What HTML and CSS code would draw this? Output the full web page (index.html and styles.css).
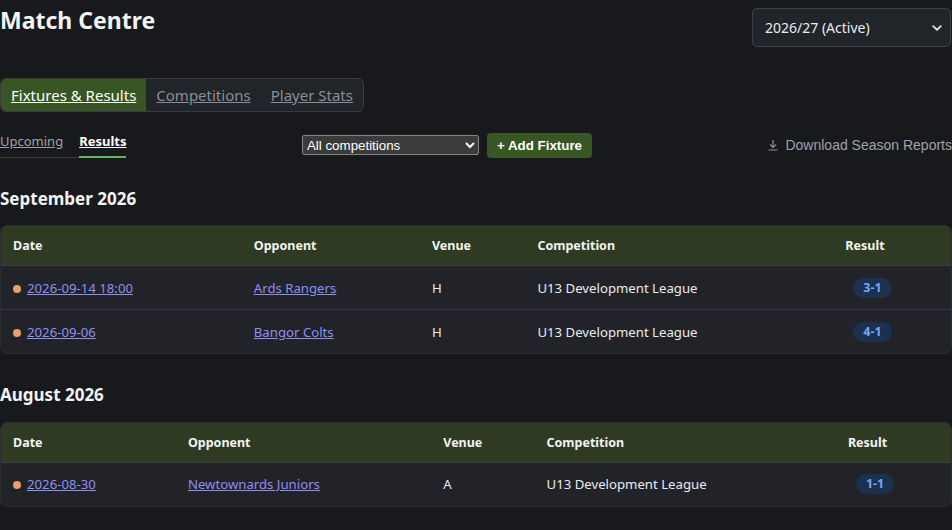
FILE: index.html
```html
<!DOCTYPE html>
<html lang="en">
<head>
    <meta charset="UTF-8">
    <meta name="viewport" content="width=device-width, initial-scale=1.0">
    <title>Match Centre</title>
    <link rel="stylesheet" href="styles.css">
</head>
<body>
    <div class="page">
        <header class="page-head">
            <h1>Match Centre</h1>
            <div class="season-picker">
                <select class="season-select">
                    <option>2026/27 (Active)</option>
                    <option>2025/26</option>
                </select>
                <svg class="season-chevron" width="10" height="10" viewBox="0 0 16 16">
                    <path d="M2 5l6 6 6-6" fill="none" stroke="#dee2e6" stroke-width="3" stroke-linecap="round" stroke-linejoin="round"/>
                </svg>
            </div>
        </header>

        <nav class="main-tabs">
            <a href="#" class="main-tab active">Fixtures &amp; Results</a>
            <a href="#" class="main-tab">Competitions</a>
            <a href="#" class="main-tab">Player Stats</a>
        </nav>

        <div class="toolbar">
            <div class="sub-tabs">
                <a href="#" class="sub-tab">Upcoming</a>
                <a href="#" class="sub-tab active">Results</a>
            </div>
            <div class="toolbar-mid">
                <select class="comp-select">
                    <option>All competitions</option>
                    <option>U13 Development League</option>
                </select>
                <button class="btn-add">+ Add Fixture</button>
            </div>
            <a href="#" class="download-link">
                <svg width="12" height="12" viewBox="0 0 12 12">
                    <path d="M6 1v7M3 5.5l3 3 3-3M1.5 11h9" fill="none" stroke="#8d9196" stroke-width="1.2"/>
                </svg>
                Download Season Reports
            </a>
        </div>

        <!-- September -->
        <section class="month">
            <h2>September 2026</h2>
            <div class="table-wrap">
                <table class="fixtures">
                    <thead>
                        <tr>
                            <th>Date</th>
                            <th>Opponent</th>
                            <th>Venue</th>
                            <th>Competition</th>
                            <th>Result</th>
                        </tr>
                    </thead>
                    <tbody>
                        <tr>
                            <td><span class="dot"></span><a href="#">2026-09-14 18:00</a></td>
                            <td><a href="#">Ards Rangers</a></td>
                            <td>H</td>
                            <td>U13 Development League</td>
                            <td><span class="score">3-1</span></td>
                        </tr>
                        <tr>
                            <td><span class="dot"></span><a href="#">2026-09-06</a></td>
                            <td><a href="#">Bangor Colts</a></td>
                            <td>H</td>
                            <td>U13 Development League</td>
                            <td><span class="score">4-1</span></td>
                        </tr>
                    </tbody>
                </table>
            </div>
        </section>

        <!-- August -->
        <section class="month">
            <h2>August 2026</h2>
            <div class="table-wrap">
                <table class="fixtures">
                    <thead>
                        <tr>
                            <th>Date</th>
                            <th>Opponent</th>
                            <th>Venue</th>
                            <th>Competition</th>
                            <th>Result</th>
                        </tr>
                    </thead>
                    <tbody>
                        <tr>
                            <td><span class="dot"></span><a href="#">2026-08-30</a></td>
                            <td><a href="#">Newtownards Juniors</a></td>
                            <td>A</td>
                            <td>U13 Development League</td>
                            <td><span class="score">1-1</span></td>
                        </tr>
                    </tbody>
                </table>
            </div>
        </section>
    </div>
</body>
</html>
```

FILE: styles.css
```css
body {
    margin: 0;
    padding: 0;
    background-color: #18191c;
    color: #e9ecef;
    font-family: "Noto Sans", "Open Sans", sans-serif;
    font-size: 14px;
    overflow: hidden;
}
.page {
    width: 952px;
}
/* Header */
.page-head {
    display: flex;
    justify-content: space-between;
    align-items: flex-start;
}
h1 {
    margin: 7px 0 0;
    font-size: 23px;
    line-height: 1.2;
    font-weight: 700;
    color: #f1f3f5;
}
.season-picker {
    position: relative;
    margin-top: 8px;
    margin-right: 1px;
}
.season-select {
    appearance: none;
    width: 199px;
    height: 39px;
    padding: 0 30px 0 12px;
    background-color: #212429;
    color: #e9ecef;
    border: 1px solid #3d4147;
    border-radius: 5px;
    font-family: "Noto Sans", sans-serif;
    font-size: 14px;
}
.season-chevron {
    position: absolute;
    right: 9px;
    top: 15px;
    pointer-events: none;
}
/* Main tabs */
.main-tabs {
    display: inline-flex;
    margin-top: 31px;
    border: 1px solid #383b41;
    border-radius: 6px;
    background-color: #212429;
    overflow: hidden;
}
.main-tab {
    padding: 0 10px;
    line-height: 32px;
    font-size: 15px;
    color: #8a8f96;
    text-decoration: underline;
}
.main-tab.active {
    background-color: #375623;
    color: #fff;
}
/* Toolbar */
.toolbar {
    display: flex;
    justify-content: space-between;
    align-items: center;
    margin-top: 20px;
}
.sub-tabs {
    display: flex;
    gap: 16px;
    border-bottom: 1px solid #3a3d42;
}
.sub-tab {
    padding-bottom: 6px;
    line-height: 18px;
    font-size: 13px;
    color: #9ea3a9;
    text-decoration: underline;
    border-bottom: 2px solid transparent;
    margin-bottom: -1px;
}
.sub-tab.active {
    color: #fff;
    font-weight: 700;
    border-bottom-color: #5cb85c;
}
.toolbar-mid {
    display: flex;
    align-items: center;
    gap: 8px;
}
.comp-select {
    color-scheme: dark;
    width: 177px;
    height: 20px;
    background-color: #3b3b3b;
    color: #fff;
    border: 1px solid #858585;
    border-radius: 2px;
    font-family: "Liberation Sans", Arial, sans-serif;
    font-size: 13.33px;
}
.btn-add {
    height: 25px;
    padding: 0 10px;
    background-color: #375623;
    color: #fff;
    border: none;
    border-radius: 4px;
    font-family: "Liberation Sans", Arial, sans-serif;
    font-size: 13.33px;
    font-weight: 700;
}
.download-link {
    display: flex;
    align-items: center;
    gap: 6px;
    color: #9ea2a8;
    text-decoration: none;
    font-family: "Liberation Sans", Arial, sans-serif;
    font-size: 14px;
    white-space: nowrap;
}
/* Month sections */
.month h2 {
    margin: 31px 0 16px;
    font-size: 17px;
    line-height: 1.2;
    font-weight: 700;
    color: #f1f3f5;
}
.table-wrap {
    margin-bottom: 6px;
    border: 1px solid #2a2d32;
    border-radius: 7px;
    overflow: hidden;
    background-color: #212328;
}
.fixtures {
    width: 100%;
    border-collapse: collapse;
}
.fixtures th {
    height: 39px;
    padding: 0 12px;
    background-color: #2f3a22;
    border-bottom: 1px solid #3b4046;
    text-align: left;
    font-size: 12.5px;
    font-weight: 700;
    color: #f1f3f5;
}
.fixtures td {
    height: 43px;
    padding: 0 12px;
    border-top: 1px solid #363a40;
    font-size: 13.2px;
    color: #e9ecef;
}
.fixtures tbody tr:first-child td {
    border-top: none;
}
.fixtures a {
    color: #8c8ff7;
}
.dot {
    display: inline-block;
    width: 8px;
    height: 8px;
    margin-right: 6px;
    border-radius: 50%;
    background-color: #e8a06b;
}
.score {
    display: inline-block;
    margin-left: 8px;
    padding: 0 10px;
    line-height: 20px;
    border-radius: 10px;
    background-color: #1c3150;
    color: #6ea8fe;
    font-size: 12.5px;
    font-weight: 700;
}
```
